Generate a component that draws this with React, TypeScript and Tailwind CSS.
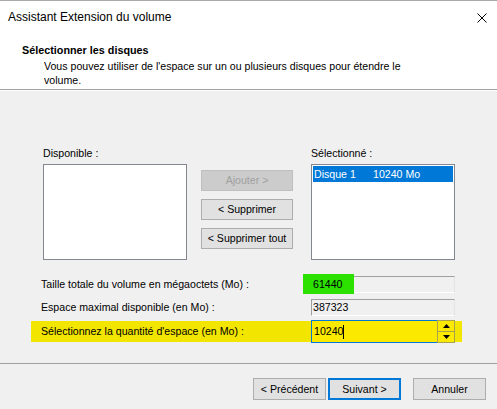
import React from 'react'

function WinButton({
  label,
  disabled = false,
  primary = false,
  className = '',
}: {
  label: string
  disabled?: boolean
  primary?: boolean
  className?: string
}) {
  const base = 'flex items-center justify-center text-[10.6px] leading-[13px] whitespace-nowrap'
  if (disabled) {
    return <div className={`${base} bg-[#cccccc] border border-[#bfbfbf] text-[#a0a0a0] ${className}`}>{label}</div>
  }
  if (primary) {
    return <div className={`${base} bg-[#e1e1e1] border-2 border-[#0078d7] text-black ${className}`}>{label}</div>
  }
  return <div className={`${base} bg-[#e1e1e1] border border-[#adadad] text-black ${className}`}>{label}</div>
}

function ReadOnlyField({ value, highlight = false }: { value: string; highlight?: boolean }) {
  return (
    <div className="relative w-[144px] h-[17px] border-t border-l border-[#a0a0a0] border-b-white border-r-[#e3e3e3] border-b border-r flex items-center">
      {highlight && <div className="absolute left-[-9px] top-[-3px] w-[51px] h-[20px] bg-[#2ce000]" />}
      <span className="relative pl-[1px] text-[10.6px] leading-[13px] text-black">{value}</span>
    </div>
  )
}

export default function App() {
  return (
    <div
      className="w-[497px] h-[409px] bg-[#f0f0f0] overflow-hidden flex flex-col border-t border-[#a9a9a9] text-black"
      style={{ fontFamily: '"Liberation Sans", Arial, sans-serif' }}
    >
      {/* en-tête blanc */}
      <div className="h-[89px] bg-white border-b border-[#a0a0a0] flex flex-col shrink-0">
        <div className="h-[33px] flex items-center justify-between pl-[8px] pr-[10px]">
          <span className="text-[12px] leading-[15px] text-black">Assistant Extension du volume</span>
          <svg width="10" height="10" viewBox="0 0 10 10">
            <path d="M0.5 0.5 L9.5 9.5 M9.5 0.5 L0.5 9.5" stroke="#000" strokeWidth="1" fill="none" />
          </svg>
        </div>
        <div className="mt-[10px] ml-[22px] text-[10.8px] leading-[13px] font-bold">Sélectionner les disques</div>
        <div className="mt-[2px] ml-[44px] text-[10.6px] leading-[14px]">
          Vous pouvez utiliser de l'espace sur un ou plusieurs disques pour étendre le
          <br />
          volume.
        </div>
      </div>
      <div className="h-px bg-white shrink-0" />

      {/* contenu */}
      <div className="flex-1 flex flex-col">
        <div className="flex mt-[56px] ml-[43px]">
          <div className="flex flex-col w-[144px]">
            <span className="text-[10.6px] leading-[13px]">Disponible :</span>
            <div className="mt-[4px] h-[96px] bg-white border border-[#828790]" />
          </div>
          <div className="flex flex-col gap-[8px] pt-[23px] ml-[14px] w-[92px]">
            <WinButton label="Ajouter >" disabled className="h-[21px]" />
            <WinButton label="< Supprimer" className="h-[21px]" />
            <WinButton label="< Supprimer tout" className="h-[21px]" />
          </div>
          <div className="flex flex-col w-[144px] ml-[18px]">
            <span className="text-[10.6px] leading-[13px]">Sélectionné :</span>
            <div className="mt-[4px] h-[96px] bg-white border border-[#828790] p-px">
              <div className="h-[16px] bg-[#0078d7] text-white text-[10.6px] leading-[13px] flex items-center pl-[1px]">
                <span className="w-[59px]">Disque 1</span>
                <span>10240 Mo</span>
              </div>
            </div>
          </div>
        </div>

        <div className="flex items-center ml-[41px] mt-[16px] h-[17px]">
          <span className="w-[270px] text-[10.6px] leading-[13px]">Taille totale du volume en mégaoctets (Mo) :</span>
          <ReadOnlyField value="61440" highlight />
        </div>
        <div className="flex items-center ml-[41px] mt-[6px] h-[17px]">
          <span className="w-[270px] text-[10.6px] leading-[13px]">Espace maximal disponible (en Mo) :</span>
          <ReadOnlyField value="387323" />
        </div>

        <div className="flex items-center ml-[31px] w-[431px] mt-[5px] h-[21px] bg-[#f2e500] pl-[10px]">
          <span className="w-[270px] text-[10.6px] leading-[13px]">Sélectionnez la quantité d'espace (en Mo) :</span>
          <div className="flex h-[23px] w-[144px] shrink-0">
            <div className="flex-1 border border-[#0078d7] border-r-0 bg-[#fbe900] flex items-center pl-[2px]">
              <span className="text-[10.6px] leading-[13px]">10240</span>
              <span className="w-px h-[14px] bg-black" />
            </div>
            <div className="w-[18px] flex flex-col border border-[#a8a24a] bg-[#fbe900]">
              <div className="flex-1 flex items-center justify-center border-b border-[#a8a24a]">
                <svg width="7" height="4" viewBox="0 0 7 4">
                  <path d="M3.5 0 L7 4 L0 4 Z" fill="#000" />
                </svg>
              </div>
              <div className="flex-1 flex items-center justify-center">
                <svg width="7" height="4" viewBox="0 0 7 4">
                  <path d="M0 0 L7 0 L3.5 4 Z" fill="#000" />
                </svg>
              </div>
            </div>
          </div>
        </div>
      </div>

      {/* pied */}
      <div className="h-[46px] shrink-0 border-t border-[#a0a0a0] flex items-start justify-end pt-[14px] pr-[11px]">
        <WinButton label="< Précédent" className="w-[73px] h-[22px]" />
        <WinButton label="Suivant >" primary className="w-[73px] h-[22px] ml-[2px]" />
        <WinButton label="Annuler" className="w-[73px] h-[22px] ml-[12px]" />
      </div>
    </div>
  )
}
